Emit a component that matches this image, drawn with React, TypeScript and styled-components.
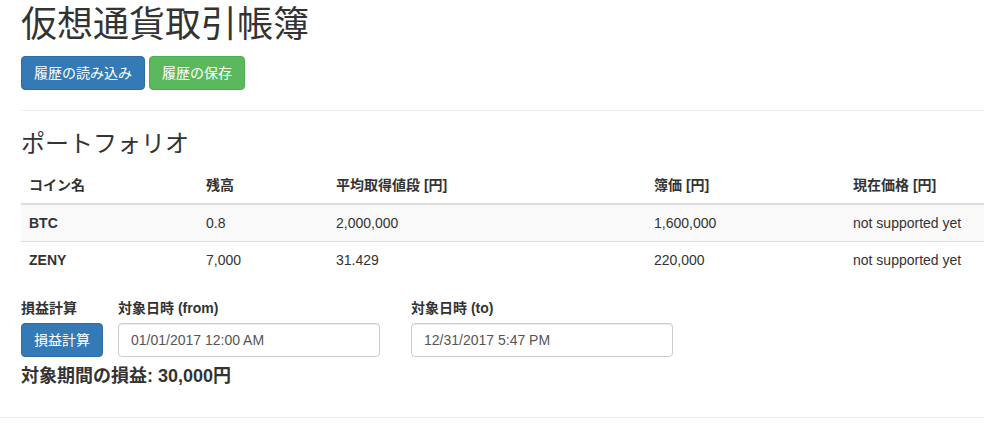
import React from "react";
import styled, { createGlobalStyle } from "styled-components";

const Global = createGlobalStyle`
  html, body { margin: 0; padding: 0; background: #fff; }
  body {
    font-family: "Liberation Sans", Arial, "Noto Sans CJK JP", sans-serif;
    font-size: 14px;
    line-height: 1.42857;
    color: #333;
  }
  * { box-sizing: border-box; }
`;

const Page = styled.div`
  width: 984px;
  overflow: hidden;
`;

const Container = styled.div`
  padding-left: 21px;
`;

const Title = styled.h1`
  font-size: 36px;
  font-weight: 400;
  line-height: 1.1;
  margin: 5px 0 11px;
  color: #333;
`;

const Toolbar = styled.div`
  display: flex;
  gap: 4px;
`;

const Button = styled.button<{ $variant: "primary" | "success" }>`
  font-family: inherit;
  font-size: 14px;
  line-height: 20px;
  padding: 6px 12px;
  border-radius: 4px;
  border: 1px solid ${(p) => (p.$variant === "primary" ? "#2e6da4" : "#4cae4c")};
  background: ${(p) => (p.$variant === "primary" ? "#337ab7" : "#5cb85c")};
  color: #fff;
  height: 34px;
  cursor: pointer;
  white-space: nowrap;
`;

const Rule = styled.hr<{ $top?: number }>`
  border: 0;
  border-top: 1px solid #eee;
  margin: ${(p) => p.$top ?? 20}px 0 20px;
  height: 0;
`;

const SectionTitle = styled.h3`
  font-size: 24px;
  font-weight: 400;
  line-height: 1.1;
  margin: 20px 0 10px;
`;

const Table = styled.table`
  width: 100%;
  border-collapse: collapse;
  border-spacing: 0;
  margin-bottom: 20px;
  table-layout: fixed;
`;

const HeadCell = styled.th`
  text-align: left;
  font-weight: bold;
  padding: 8px;
  line-height: 20px;
  border-bottom: 2px solid #ddd;
  vertical-align: bottom;
`;

const Row = styled.tr<{ $striped: boolean }>`
  background: ${(p) => (p.$striped ? "#f9f9f9" : "transparent")};
`;

const Cell = styled.td<{ $bold?: boolean }>`
  padding: 8px;
  line-height: 20px;
  border-top: 1px solid #ddd;
  font-weight: ${(p) => (p.$bold ? "bold" : "normal")};
  white-space: nowrap;
`;

const FormRow = styled.div`
  display: flex;
  align-items: flex-start;
`;

const Group = styled.div<{ $gap: number }>`
  display: flex;
  flex-direction: column;
  margin-right: ${(p) => p.$gap}px;
`;

const Label = styled.label`
  font-weight: bold;
  line-height: 20px;
  margin-bottom: 5px;
  display: block;
`;

const Input = styled.input`
  width: 262px;
  height: 34px;
  padding: 6px 12px;
  font-family: inherit;
  font-size: 14px;
  line-height: 20px;
  color: #555;
  border: 1px solid #ccc;
  border-radius: 4px;
  background: #fff;
  box-shadow: inset 0 1px 1px rgba(0, 0, 0, 0.075);
`;

const Result = styled.h4`
  font-size: 18px;
  font-weight: bold;
  line-height: 1.1;
  margin: 10px 0;
`;

const cols = [177, 130, 318, 199, 139];
const headers = ["コイン名", "残高", "平均取得値段 [円]", "簿価 [円]", "現在価格 [円]"];
const rows = [
  ["BTC", "0.8", "2,000,000", "1,600,000", "not supported yet"],
  ["ZENY", "7,000", "31.429", "220,000", "not supported yet"],
];

export default function App() {
  return (
    <Page>
      <Global />
      <Container>
        <Title>仮想通貨取引帳簿</Title>
        <Toolbar>
          <Button $variant="primary">履歴の読み込み</Button>
          <Button $variant="success">履歴の保存</Button>
        </Toolbar>
        <Rule />
        <SectionTitle>ポートフォリオ</SectionTitle>
        <Table>
          <colgroup>
            {cols.map((w, i) => (
              <col key={i} style={{ width: w }} />
            ))}
          </colgroup>
          <thead>
            <tr>
              {headers.map((h) => (
                <HeadCell key={h}>{h}</HeadCell>
              ))}
            </tr>
          </thead>
          <tbody>
            {rows.map((r, i) => (
              <Row key={r[0]} $striped={i % 2 === 0}>
                {r.map((c, j) => (
                  <Cell key={j} $bold={j === 0}>
                    {c}
                  </Cell>
                ))}
              </Row>
            ))}
          </tbody>
        </Table>
        <FormRow>
          <Group $gap={15}>
            <Label>損益計算</Label>
            <Button $variant="primary">損益計算</Button>
          </Group>
          <Group $gap={31}>
            <Label>対象日時 (from)</Label>
            <Input defaultValue="01/01/2017 12:00 AM" />
          </Group>
          <Group $gap={0}>
            <Label>対象日時 (to)</Label>
            <Input defaultValue="12/31/2017 5:47 PM" />
          </Group>
        </FormRow>
        <Result>対象期間の損益: 30,000円</Result>
      </Container>
      <Rule $top={30} />
    </Page>
  );
}
